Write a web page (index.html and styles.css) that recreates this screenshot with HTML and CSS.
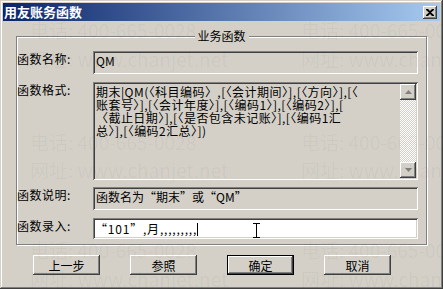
FILE: index.html
```html
<!DOCTYPE html>
<html lang="zh">
<head>
    <meta charset="UTF-8">
    <title>用友账务函数</title>
    <link rel="stylesheet" href="styles.css">
</head>
<body>

<div class="window">
    <div class="titlebar">
        <span class="title">用友账务函数</span>
        <span class="close-btn">
            <svg width="8" height="7" viewBox="0 0 8 7"><path d="M0 0h2l2 2 2-2h2v1L5 3.5 8 6v1H6L4 5 2 7H0V6l3-2.5L0 1z" fill="#000"/></svg>
        </span>
    </div>

    <div class="content">
        <div class="group">
            <span class="legend">业务函数</span>

            <div class="row">
                <label>函数名称:</label>
                <div class="field readonly">QM</div>
            </div>

            <div class="row row-format">
                <label>函数格式:</label>
                <div class="field readonly memo">
                    <div class="memo-text">
                        期末|QM(〈科目编码〉,[〈会计期间〉],[〈方向〉],[〈<br>
                        账套号〉],[〈会计年度〉],[〈编码1〉],[〈编码2〉],[<br>
                        〈截止日期〉],[〈是否包含未记账〉],[〈编码1汇<br>
                        总〉],[〈编码2汇总〉])
                    </div>
                    <div class="scrollbar">
                        <span class="sb-btn"><svg width="7" height="4" viewBox="0 0 7 4"><path d="M3.5 0L7 4H0z" fill="#808080"/></svg></span>
                        <span class="sb-track"></span>
                        <span class="sb-btn"><svg width="7" height="4" viewBox="0 0 7 4"><path d="M0 0h7L3.5 4z" fill="#808080"/></svg></span>
                    </div>
                </div>
            </div>

            <div class="row">
                <label>函数说明:</label>
                <div class="field readonly">函数名为“期末”或“QM”</div>
            </div>

            <div class="row row-input">
                <label>函数录入:</label>
                <div class="field editable"><span class="entry">“101”,月,,,,,,,,,</span><span class="caret"></span>
                    <svg class="ibeam" width="7" height="15" viewBox="0 0 7 15"><path d="M0 .5h7M0 14.5h7M3.5 0v15" stroke="#000" stroke-width="1" fill="none"/></svg>
                </div>
            </div>
        </div>

        <div class="buttons">
            <button>上一步</button>
            <button>参照</button>
            <button class="default">确定</button>
            <button>取消</button>
        </div>
    </div>

    <!-- 水印 -->
    <div class="watermark">
        <span style="left:30px;top:20px">电话: 400-665-0028</span>
        <span style="left:301px;top:20px">电话: 400-665-0028</span>
        <span style="left:30px;top:49px">网址: www.chanjet.net</span>
        <span style="left:301px;top:49px">网址: www.chanjet.net</span>
        <span style="left:30px;top:132px">电话: 400-665-0028</span>
        <span style="left:301px;top:132px">电话: 400-665-0028</span>
        <span style="left:30px;top:160px">网址: www.chanjet.net</span>
        <span style="left:301px;top:160px">网址: www.chanjet.net</span>
        <span style="left:30px;top:240px">电话: 400-665-0028</span>
        <span style="left:301px;top:240px">电话: 400-665-0028</span>
        <span style="left:30px;top:269px">网址: www.chanjet.net</span>
        <span style="left:301px;top:269px">网址: www.chanjet.net</span>
    </div>
</div>

</body>
</html>
```

FILE: styles.css
```css
body {
    margin: 0;
    font-family: "Noto Sans CJK SC", "Liberation Sans", sans-serif;
    font-size: 12px;
    color: #000;
    background: #d4d0c8;
}
.window {
    position: relative;
    width: 443px;
    height: 289px;
    box-sizing: border-box;
    padding: 3px;
    background: #d4d0c8;
    overflow: hidden;
    box-shadow: inset -1px -1px #404040, inset 1px 1px #d4d0c8,
                inset -2px -2px #808080, inset 2px 2px #fff;
}
.titlebar {
    height: 18px;
    display: flex;
    align-items: center;
    justify-content: space-between;
    padding: 0 3px 0 1px;
    background: linear-gradient(to right, #0a246a, #a6caf0);
}
.title {
    color: #fff;
    font-weight: bold;
    font-size: 13px;
    line-height: 18px;
}
.close-btn {
    width: 14px;
    height: 13px;
    display: flex;
    align-items: center;
    justify-content: center;
    background: #d4d0c8;
    box-shadow: inset -1px -1px #404040, inset 1px 1px #fff,
                inset -2px -2px #808080;
}
.content {
    padding: 15px 13px 0 13px;
}
.group {
    position: relative;
    height: 209px;
    box-sizing: border-box;
    border: 1px solid #808080;
    box-shadow: inset 1px 1px #fff, 1px 1px #fff;
    padding: 14px 8px 0 0;
    display: flex;
    flex-direction: column;
    gap: 8px;
}
.legend {
    position: absolute;
    top: -9px;
    left: 50%;
    transform: translateX(-50%);
    padding: 0 3px;
    background: #d4d0c8;
    line-height: 16px;
}
.row {
    display: flex;
    height: 23px;
}
.row-format {
    height: 98px;
    margin-bottom: -1px;
}
.row-input {
    height: 21px;
}
.row label {
    width: 76px;
    padding-top: 1px;
    line-height: 14px;
    white-space: nowrap;
    letter-spacing: 0.5px;
}
.field {
    position: relative;
    flex: 1;
    box-sizing: border-box;
    padding: 3px 3px 0 3px;
    line-height: 14px;
    white-space: nowrap;
    overflow: hidden;
    box-shadow: inset 1px 1px #808080, inset -1px -1px #fff,
                inset 2px 2px #404040, inset -2px -2px #d4d0c8;
}
.readonly {
    background: #d4d0c8;
}
.editable {
    background: #fff;
    padding-top: 4px;
    padding-left: 2px;
}
.entry {
    letter-spacing: 0.8px;
}
.memo {
    display: flex;
    padding: 2px 2px 2px 2px;
}
.memo-text {
    flex: 1;
    padding: 1px 0 0 1px;
    line-height: 13px;
    overflow: hidden;
    letter-spacing: 0.45px;
}
.scrollbar {
    width: 16px;
    display: flex;
    flex-direction: column;
}
.sb-btn {
    height: 16px;
    display: flex;
    align-items: center;
    justify-content: center;
    background: #d4d0c8;
    box-shadow: inset -1px -1px #404040, inset 1px 1px #fff,
                inset -2px -2px #808080;
}
.sb-track {
    flex: 1;
    background-color: #fff;
    background-image: linear-gradient(45deg, #d4d0c8 25%, transparent 25%, transparent 75%, #d4d0c8 75%),
                      linear-gradient(45deg, #d4d0c8 25%, transparent 25%, transparent 75%, #d4d0c8 75%);
    background-size: 2px 2px;
    background-position: 0 0, 1px 1px;
}
.caret {
    display: inline-block;
    width: 1px;
    height: 13px;
    background: #000;
    vertical-align: -2px;
}
.ibeam {
    position: absolute;
    left: 160px;
    top: 5px;
}
.buttons {
    display: flex;
    gap: 30px;
    padding: 10px 0 0 17px;
}
button {
    width: 67px;
    height: 20px;
    padding: 0;
    border: none;
    background: #d4d0c8;
    font-family: inherit;
    font-size: 12px;
    color: #000;
    box-shadow: inset -1px -1px #404040, inset 1px 1px #fff,
                inset -2px -2px #808080;
}
button.default {
    box-shadow: inset 0 0 0 1px #000, inset -2px -2px #404040, inset 2px 2px #fff,
                inset -3px -3px #808080;
}
.watermark {
    position: absolute;
    inset: 0;
    pointer-events: none;
}
.watermark span {
    position: absolute;
    font-size: 19px;
    line-height: 20px;
    white-space: nowrap;
    color: rgba(0, 0, 0, 0.045);
}
```
